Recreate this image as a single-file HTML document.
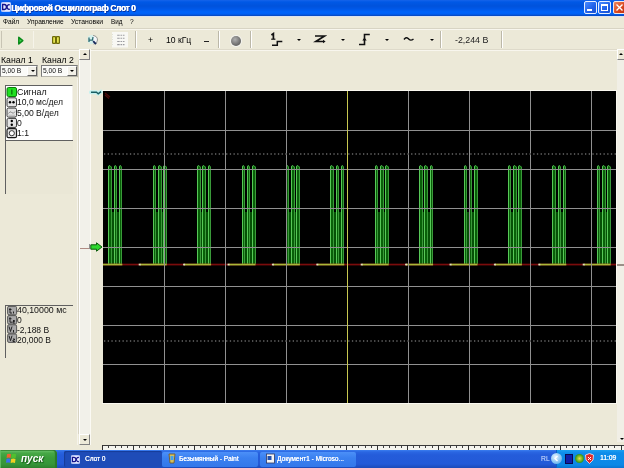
<!DOCTYPE html>
<html><head><meta charset="utf-8">
<style>
*{box-sizing:border-box}
html,body{margin:0;padding:0}
body{width:624px;height:468px;overflow:hidden;background:#ECE9D8;position:relative;font-family:"Liberation Sans",sans-serif;color:#000}
.a{position:absolute}
.t{position:absolute;white-space:pre;line-height:1;will-change:transform}
.sep{position:absolute;top:31px;width:2px;height:17px;border-left:1px solid #BCB8A8;border-right:1px solid #FFFFFF}
.dd{position:absolute;top:38.5px;width:0;height:0;border-left:2px solid transparent;border-right:2px solid transparent;border-top:2px solid #000}
.ic{position:absolute;width:9px;height:9px;background:#D6D3C8;border:1px solid #444}
</style></head><body>
<!-- ===== title bar ===== -->
<div class="a" style="left:0;top:0;width:624px;height:16px;background:linear-gradient(#1664EA 0px,#0058E6 2px,#0052DC 6px,#0058E8 9px,#0064FA 12px,#0060F4 14px,#0A46B8 16px)"></div>
<div class="a" style="left:0;top:16px;width:624px;height:1px;background:#DCE4F0"></div>
<svg class="a" style="left:1.3px;top:2.3px" width="10" height="10" viewBox="0 0 11 11">
<rect x="0.5" y="0.5" width="10" height="10" rx="1" fill="#E4E8FF" stroke="#C8D4FF" stroke-width="1"/>
<path d="M1.8 2.8 L3.8 2.8 Q6 3 6 5.5 Q6 8 3.8 8.2 L1.8 8.2 Z" fill="none" stroke="#14148C" stroke-width="1.5"/>
<path d="M9.6 3.2 Q7.2 2.2 6.6 5.5 Q7.2 8.8 9.6 7.8" fill="none" stroke="#14148C" stroke-width="1.5"/>
</svg>
<div class="t" style="left:11px;top:3.8px;font-size:8.4px;letter-spacing:-0.35px;font-weight:bold;color:#fff;text-shadow:0.45px 0 0 #fff,1px 1px 0 #0A2A90">Цифровой Осциллограф Слот 0</div>
<!-- min/max/close -->
<div class="a" style="left:584px;top:1px;width:13px;height:13px;border-radius:2px;border:1px solid #E6EEFF;background:linear-gradient(135deg,#4A8CFF,#2060E8 60%,#1850D0)"></div>
<div class="a" style="left:587px;top:9px;width:5px;height:2px;background:#fff"></div>
<div class="a" style="left:598px;top:1px;width:13px;height:13px;border-radius:2px;border:1px solid #E6EEFF;background:linear-gradient(135deg,#4A8CFF,#2060E8 60%,#1850D0)"></div>
<div class="a" style="left:601px;top:4px;width:7px;height:7px;border:1px solid #fff;border-top-width:2px"></div>
<div class="a" style="left:613px;top:1px;width:13px;height:13px;border-radius:2px;border:1px solid #F0E8E8;background:linear-gradient(135deg,#F08A60,#D8461E 60%,#C03010)"></div>
<svg class="a" style="left:615px;top:3px" width="9" height="9" viewBox="0 0 9 9"><path d="M1.5 1.5 L7.5 7.5 M7.5 1.5 L1.5 7.5" stroke="#fff" stroke-width="1.4"/></svg>

<!-- ===== menu ===== -->
<div class="t" style="left:3px;top:19.2px;font-size:6.6px">Файл</div>
<div class="t" style="left:26.5px;top:19.2px;font-size:6.6px">Управление</div>
<div class="t" style="left:70.5px;top:19.2px;font-size:6.8px">Установки</div>
<div class="t" style="left:111px;top:19.2px;font-size:6.3px">Вид</div>
<div class="t" style="left:130px;top:19.2px;font-size:6.6px">?</div>
<div class="a" style="left:0;top:28px;width:624px;height:1px;background:#D8D4C4"></div>
<div class="a" style="left:0;top:29px;width:624px;height:1px;background:#F8F6EE"></div>

<!-- ===== toolbar ===== -->
<div class="a" style="left:1px;top:31px;width:1px;height:17px;background:#C8C4B4"></div>
<div class="a" style="left:33px;top:31px;width:1px;height:17px;background:#F6F4EA"></div>
<!-- play -->
<svg class="a" style="left:17px;top:35.5px" width="8" height="10" viewBox="0 0 8 10"><path d="M1.8 1.3 L5.8 4.6 L1.8 7.9 Z" fill="#40D850" stroke="#0A8A1A" stroke-width="1.5" stroke-linejoin="round"/></svg>
<!-- pause -->
<svg class="a" style="left:52px;top:35.8px" width="8" height="8" viewBox="0 0 8 8"><rect x="0.6" y="0.6" width="3" height="6.8" rx="0.6" fill="#E6E650" stroke="#6E6A08" stroke-width="1.2"/><rect x="4.4" y="0.6" width="3" height="6.8" rx="0.6" fill="#E6E650" stroke="#6E6A08" stroke-width="1.2"/></svg>
<!-- magnifier -->
<svg class="a" style="left:84px;top:31px" width="18" height="17" viewBox="84 31 18 17"><ellipse cx="91.5" cy="39.5" rx="4" ry="4.6" fill="#D4F0EC"/><path d="M93 35.5 Q97.5 36 97.5 40 Q97.5 44 93.5 44" fill="#F4F6FA" stroke="#8A8C88" stroke-width="0.9"/><path d="M89 37.5 V42 M89 40.2 H92.5 L93 37" stroke="#2E6A70" stroke-width="1.3" fill="none"/><path d="M93.2 41.2 L96 44.2" stroke="#16285A" stroke-width="1.8"/></svg>
<!-- list -->
<svg class="a" style="left:112px;top:31px" width="17" height="17" viewBox="112 31 17 17"><rect x="112" y="32" width="16" height="15.5" fill="#F8F8F4"/><path d="M117.2 35.3h7.3M117.2 38.3h7.3M117.2 41.5h7.3M117.2 44.6h7.3" stroke="#9C9CA0" stroke-width="1.1" stroke-dasharray="2.5 0.8 1.5 0.8"/><path d="M112.5 34v12" stroke="#D8DCD0" stroke-width="0.8" stroke-dasharray="1 1.5"/></svg>
<div class="sep" style="left:135px"></div>
<div class="t" style="left:147.5px;top:36px;font-size:8.6px">+</div>
<div class="t" style="left:165.5px;top:36.2px;font-size:8.6px">10 кГц</div>
<div class="a" style="left:204px;top:40.5px;width:5px;height:1px;background:#222"></div>
<div class="sep" style="left:218px"></div>
<!-- ball -->
<div class="a" style="left:231px;top:35.5px;width:10px;height:10px;border-radius:50%;background:radial-gradient(circle at 40% 35%,#B0B0B0,#707070 60%,#505050);box-shadow:0 0 0 1px #F4F4F0"></div>
<div class="sep" style="left:250px"></div>
<!-- trigger mode icon 1_r -->
<svg class="a" style="left:268px;top:32px" width="16" height="15" viewBox="0 0 16 15">
<path d="M3.4 3 L5.4 1.6 L5.4 7" stroke="#111" stroke-width="1.7" fill="none"/><path d="M3.2 7.2 L7.4 7.2" stroke="#111" stroke-width="1.2"/>
<path d="M4 13.2 L9.3 13.2 L9.3 9.5 L14.3 9.5" stroke="#111" stroke-width="1.5" fill="none"/>
</svg>
<div class="dd" style="left:296.5px"></div>
<!-- Z icon -->
<svg class="a" style="left:313px;top:33px" width="14" height="12" viewBox="0 0 14 12">
<path d="M2 3 L11.5 3 L2.8 8.5 L10.5 8.5" stroke="#111" stroke-width="1.7" fill="none"/>
<path d="M10 6.8 L12.6 8.5 L10 10.2 Z" fill="#111"/>
</svg>
<div class="dd" style="left:340.5px"></div>
<!-- rising edge -->
<svg class="a" style="left:357px;top:32px" width="15" height="15" viewBox="0 0 15 15">
<path d="M2 12.5 L7.5 12.5 L7.5 2.5 L12.8 2.5" stroke="#111" stroke-width="1.6" fill="none"/>
<path d="M5.3 8.6 L7.5 5.5 L9.7 8.6 Z" fill="#111"/>
</svg>
<div class="dd" style="left:385px"></div>
<!-- tilde -->
<svg class="a" style="left:402px;top:35px" width="14" height="9" viewBox="0 0 14 9">
<path d="M2 4.5 Q4 1.5 6.2 3.5 Q8.5 6.5 11.5 4" stroke="#111" stroke-width="1.4" fill="none"/>
</svg>
<div class="dd" style="left:429.5px"></div>
<div class="sep" style="left:440px"></div>
<div class="t" style="left:454.5px;top:36.2px;font-size:8.8px;color:#222">-2,244 В</div>
<div class="sep" style="left:501px"></div>
<div class="a" style="left:0;top:49px;width:624px;height:1px;background:#DEDACA"></div>
<div class="a" style="left:0;top:50px;width:624px;height:1px;background:#F8F6EE"></div>

<!-- ===== left panel ===== -->
<div class="t" style="left:1.3px;top:55.8px;font-size:8.7px">Канал 1</div>
<div class="t" style="left:42.3px;top:55.8px;font-size:8.7px">Канал 2</div>
<!-- combos -->
<div class="a" style="left:0px;top:65px;width:38px;height:12px;background:#FBFBF8;border-top:1px solid #7A7A7A;border-left:1px solid #7A7A7A;border-bottom:1px solid #B8B6AC;border-right:1px solid #B8B6AC"></div>
<div class="a" style="left:27px;top:66px;width:10px;height:10px;background:#F2F0E8;border-right:1px solid #606060;border-bottom:1px solid #606060;border-left:1px solid #FFF;border-top:1px solid #FFF"></div>
<div class="dd" style="left:30.5px;top:70px;border-left-width:2px;border-right-width:2px;border-top-width:2.5px"></div>
<div class="t" style="left:1.8px;top:68.4px;font-size:6.7px;color:#111">5,00 В</div>
<div class="a" style="left:40.5px;top:65px;width:37px;height:12px;background:#FBFBF8;border-top:1px solid #7A7A7A;border-left:1px solid #7A7A7A;border-bottom:1px solid #B8B6AC;border-right:1px solid #B8B6AC"></div>
<div class="a" style="left:66.5px;top:66px;width:10px;height:10px;background:#F2F0E8;border-right:1px solid #606060;border-bottom:1px solid #606060;border-left:1px solid #FFF;border-top:1px solid #FFF"></div>
<div class="dd" style="left:70px;top:70px;border-left-width:2px;border-right-width:2px;border-top-width:2.5px"></div>
<div class="t" style="left:42.5px;top:68.4px;font-size:6.7px;color:#111">5,00 В</div>
<!-- panel edge -->
<div class="a" style="left:77px;top:78px;width:1px;height:367px;background:#F6F4EC"></div><div class="a" style="left:78px;top:60px;width:1px;height:374px;background:#D8D4C4"></div>
<!-- info box -->
<div class="a" style="left:5px;top:85px;width:67.5px;height:55px;background:#FFFFFF;border-top:1px solid #606060;border-left:1px solid #606060;border-right:1px solid #F4F2EA"></div>
<svg class="a" style="left:6px;top:87px" width="12" height="52" viewBox="0 0 12 52">
<rect x="1" y="0.5" width="9.5" height="9" rx="1.5" fill="#20E020" stroke="#0A7A0A" stroke-width="1"/>
<rect x="5" y="2.5" width="1.6" height="5" fill="#0C8A0C"/>
<rect x="1" y="10.8" width="9.5" height="9" rx="1.5" fill="#E4E4E4" stroke="#3A3A3A" stroke-width="1"/>
<circle cx="4" cy="15.3" r="1.2" fill="#000"/><circle cx="7.5" cy="15.3" r="1.2" fill="#000"/>
<rect x="1" y="21.1" width="9.5" height="9" rx="1.5" fill="#E4E4E4" stroke="#3A3A3A" stroke-width="1"/>
<path d="M2.5 26.5 Q4 23.5 5.7 25.5 T9 24.5" stroke="#808080" stroke-width="0.9" fill="none"/>
<path d="M2.5 28.2 H9" stroke="#A0A0A0" stroke-width="0.7"/>
<rect x="1" y="31.4" width="9.5" height="9" rx="1.5" fill="#E4E4E4" stroke="#3A3A3A" stroke-width="1"/>
<circle cx="5.8" cy="34" r="1.2" fill="#000"/><circle cx="5.8" cy="37.8" r="1.2" fill="#000"/>
<rect x="1" y="41.7" width="9.5" height="9" rx="1.5" fill="#E4E4E4" stroke="#1A1A1A" stroke-width="1.2"/>
<circle cx="5.8" cy="46.2" r="2.6" fill="#FFF" stroke="#222" stroke-width="0.9"/>
</svg>
<div class="t" style="left:17.2px;top:87.6px;font-size:8.9px;color:#111">Сигнал</div>
<div class="t" style="left:17.2px;top:98.3px;font-size:8.55px;color:#111">10,0 мс/дел</div>
<div class="t" style="left:17.2px;top:108.5px;font-size:8.6px;color:#111">5,00 В/дел</div>
<div class="t" style="left:17.2px;top:118.7px;font-size:8.6px;color:#111">0</div>
<div class="t" style="left:17.2px;top:128.9px;font-size:8.6px;color:#111">1:1</div>
<!-- second frame -->
<div class="a" style="left:5px;top:140px;width:67.5px;height:54px;border-top:1px solid #606060;border-left:1px solid #606060;background:#EAE7D6"></div>
<!-- bottom box -->
<div class="a" style="left:5px;top:304.5px;width:68px;height:53px;border-top:1px solid #606060;border-left:1px solid #606060"></div>
<svg class="a" style="left:7px;top:306px" width="11" height="38" viewBox="0 0 11 38">
<g fill="#A8A8A8" stroke="#4A4A4A" stroke-width="0.9">
<rect x="0.6" y="0.4" width="9" height="8.4" rx="1.3"/>
<rect x="0.6" y="9.6" width="9" height="8.4" rx="1.3"/>
<rect x="0.6" y="18.8" width="9" height="8.4" rx="1.3"/>
<rect x="0.6" y="28" width="9" height="8.4" rx="1.3"/>
</g>
<g stroke="#222" stroke-width="1" fill="none">
<path d="M3 2 V7 H5 M2 3.5 H4.5"/><path d="M6.5 5.5 V7.5"/>
<path d="M3 11.2 V16.2 H5 M2 12.7 H4.5"/><path d="M6 14.5 H7.5 V15.5 H6 V17 H7.8"/>
<path d="M2 20.5 L3.5 25.5 L5 20.5"/><path d="M6.5 24 V26.5"/>
<path d="M2 29.7 L3.5 34.7 L5 29.7"/><path d="M6 33 H7.5 V34 H6 V35.5 H7.8"/>
</g>
</svg>
<div class="t" style="left:16.7px;top:306.3px;font-size:8.8px;color:#111">40,10000 мс</div>
<div class="t" style="left:16.7px;top:316.3px;font-size:8.5px;color:#111">0</div>
<div class="t" style="left:16.7px;top:326.3px;font-size:8.5px;color:#111">-2,188 В</div>
<div class="t" style="left:16.7px;top:336.2px;font-size:8.5px;color:#111">20,000 В</div>

<!-- ===== left scrollbar ===== -->
<div class="a" style="left:79px;top:49px;width:12px;height:396px;background:#F2F1EA;border-left:1px solid #FFFFFF;border-right:1px solid #FBFAF4"></div>
<div class="a" style="left:79px;top:49px;width:11px;height:11px;background:#ECE9D8;border-right:1px solid #808080;border-bottom:1px solid #808080;border-left:1px solid #fff;border-top:1px solid #fff"></div>
<div class="dd" style="left:82.5px;top:53px;border-top:0;border-bottom:2.5px solid #000;border-left-width:2px;border-right-width:2px"></div>
<div class="a" style="left:79px;top:434px;width:11px;height:11px;background:#ECE9D8;border-right:1px solid #808080;border-bottom:1px solid #808080;border-left:1px solid #fff;border-top:1px solid #fff"></div>
<div class="dd" style="left:82.5px;top:438.5px;border-left-width:2px;border-right-width:2px;border-top-width:2.5px"></div>
<div class="a" style="left:80px;top:247.5px;width:9px;height:1px;background:#B08C84"></div>
<div class="a" style="left:89px;top:244px;width:1px;height:5px;background:#909090"></div>

<!-- markers -->
<svg class="a" style="left:88px;top:86px" width="15" height="12" viewBox="88 86 15 12">
<path d="M91 92.3 L96.5 92.3 L98.2 93.8 L101 91.6" stroke="#C4F2F0" stroke-width="4" fill="none" stroke-linejoin="round" stroke-linecap="round"/>
<path d="M91 92.3 L96.5 92.3 L98.2 93.8 L101 91.6" stroke="#1A5E62" stroke-width="1.4" fill="none"/>
</svg>
<svg class="a" style="left:90px;top:242px" width="13" height="10" viewBox="0 0 13 10">
<path d="M0.8 2.8 L6.5 2.8 L6.5 0.8 L12 5 L6.5 9.2 L6.5 7.2 L0.8 7.2 Z" fill="#2ED82E" stroke="#0A5A0A" stroke-width="1"/>
</svg>

<svg class="a" style="left:103px;top:91px" width="513" height="312" viewBox="103 91 513 312">
<rect x="103" y="91" width="513" height="312" fill="#000"/>
<rect x="108" y="212" width="14" height="52" fill="#065006"/>
<rect x="108.5" y="166" width="3.0" height="98.5" fill="#086008"/>
<polyline points="108.5,167 109.3,165.5 111.5,167 111.5,264.5" fill="none" stroke="#3A9A3A" stroke-width="1"/>
<polyline points="108.5,264.5 108.5,166.5 109.3,165.5" fill="none" stroke="#58C858" stroke-width="1"/>
<rect x="114.5" y="166" width="2.0" height="98.5" fill="#086008"/>
<polyline points="114.5,167 115.3,165.5 116.5,167 116.5,264.5" fill="none" stroke="#3A9A3A" stroke-width="1"/>
<polyline points="114.5,264.5 114.5,166.5 115.3,165.5" fill="none" stroke="#58C858" stroke-width="1"/>
<rect x="119.5" y="166" width="2.0" height="98.5" fill="#086008"/>
<polyline points="119.5,167 120.3,165.5 121.5,167 121.5,264.5" fill="none" stroke="#3A9A3A" stroke-width="1"/>
<polyline points="119.5,264.5 119.5,166.5 120.3,165.5" fill="none" stroke="#58C858" stroke-width="1"/>
<rect x="153" y="212" width="14" height="52" fill="#065006"/>
<rect x="153.5" y="166" width="2.0" height="98.5" fill="#086008"/>
<polyline points="153.5,167 154.3,165.5 155.5,167 155.5,264.5" fill="none" stroke="#3A9A3A" stroke-width="1"/>
<polyline points="153.5,264.5 153.5,166.5 154.3,165.5" fill="none" stroke="#58C858" stroke-width="1"/>
<rect x="158.5" y="166" width="3.0" height="98.5" fill="#086008"/>
<polyline points="158.5,167 159.3,165.5 161.5,167 161.5,264.5" fill="none" stroke="#3A9A3A" stroke-width="1"/>
<polyline points="158.5,264.5 158.5,166.5 159.3,165.5" fill="none" stroke="#58C858" stroke-width="1"/>
<rect x="163.5" y="166" width="3.0" height="98.5" fill="#086008"/>
<polyline points="163.5,167 164.3,165.5 166.5,167 166.5,264.5" fill="none" stroke="#3A9A3A" stroke-width="1"/>
<polyline points="163.5,264.5 163.5,166.5 164.3,165.5" fill="none" stroke="#58C858" stroke-width="1"/>
<rect x="197" y="212" width="14" height="52" fill="#065006"/>
<rect x="197.5" y="166" width="3.0" height="98.5" fill="#086008"/>
<polyline points="197.5,167 198.3,165.5 200.5,167 200.5,264.5" fill="none" stroke="#3A9A3A" stroke-width="1"/>
<polyline points="197.5,264.5 197.5,166.5 198.3,165.5" fill="none" stroke="#58C858" stroke-width="1"/>
<rect x="202.5" y="166" width="3.0" height="98.5" fill="#086008"/>
<polyline points="202.5,167 203.3,165.5 205.5,167 205.5,264.5" fill="none" stroke="#3A9A3A" stroke-width="1"/>
<polyline points="202.5,264.5 202.5,166.5 203.3,165.5" fill="none" stroke="#58C858" stroke-width="1"/>
<rect x="208.5" y="166" width="2.0" height="98.5" fill="#086008"/>
<polyline points="208.5,167 209.3,165.5 210.5,167 210.5,264.5" fill="none" stroke="#3A9A3A" stroke-width="1"/>
<polyline points="208.5,264.5 208.5,166.5 209.3,165.5" fill="none" stroke="#58C858" stroke-width="1"/>
<rect x="242" y="212" width="14" height="52" fill="#065006"/>
<rect x="242.5" y="166" width="2.0" height="98.5" fill="#086008"/>
<polyline points="242.5,167 243.3,165.5 244.5,167 244.5,264.5" fill="none" stroke="#3A9A3A" stroke-width="1"/>
<polyline points="242.5,264.5 242.5,166.5 243.3,165.5" fill="none" stroke="#58C858" stroke-width="1"/>
<rect x="247.5" y="166" width="2.0" height="98.5" fill="#086008"/>
<polyline points="247.5,167 248.3,165.5 249.5,167 249.5,264.5" fill="none" stroke="#3A9A3A" stroke-width="1"/>
<polyline points="247.5,264.5 247.5,166.5 248.3,165.5" fill="none" stroke="#58C858" stroke-width="1"/>
<rect x="252.5" y="166" width="3.0" height="98.5" fill="#086008"/>
<polyline points="252.5,167 253.3,165.5 255.5,167 255.5,264.5" fill="none" stroke="#3A9A3A" stroke-width="1"/>
<polyline points="252.5,264.5 252.5,166.5 253.3,165.5" fill="none" stroke="#58C858" stroke-width="1"/>
<rect x="286" y="212" width="14" height="52" fill="#065006"/>
<rect x="286.5" y="166" width="2.0" height="98.5" fill="#086008"/>
<polyline points="286.5,167 287.3,165.5 288.5,167 288.5,264.5" fill="none" stroke="#3A9A3A" stroke-width="1"/>
<polyline points="286.5,264.5 286.5,166.5 287.3,165.5" fill="none" stroke="#58C858" stroke-width="1"/>
<rect x="291.5" y="166" width="3.0" height="98.5" fill="#086008"/>
<polyline points="291.5,167 292.3,165.5 294.5,167 294.5,264.5" fill="none" stroke="#3A9A3A" stroke-width="1"/>
<polyline points="291.5,264.5 291.5,166.5 292.3,165.5" fill="none" stroke="#58C858" stroke-width="1"/>
<rect x="296.5" y="166" width="3.0" height="98.5" fill="#086008"/>
<polyline points="296.5,167 297.3,165.5 299.5,167 299.5,264.5" fill="none" stroke="#3A9A3A" stroke-width="1"/>
<polyline points="296.5,264.5 296.5,166.5 297.3,165.5" fill="none" stroke="#58C858" stroke-width="1"/>
<rect x="330" y="212" width="14" height="52" fill="#065006"/>
<rect x="330.5" y="166" width="3.0" height="98.5" fill="#086008"/>
<polyline points="330.5,167 331.3,165.5 333.5,167 333.5,264.5" fill="none" stroke="#3A9A3A" stroke-width="1"/>
<polyline points="330.5,264.5 330.5,166.5 331.3,165.5" fill="none" stroke="#58C858" stroke-width="1"/>
<rect x="336.5" y="166" width="2.0" height="98.5" fill="#086008"/>
<polyline points="336.5,167 337.3,165.5 338.5,167 338.5,264.5" fill="none" stroke="#3A9A3A" stroke-width="1"/>
<polyline points="336.5,264.5 336.5,166.5 337.3,165.5" fill="none" stroke="#58C858" stroke-width="1"/>
<rect x="341.5" y="166" width="2.0" height="98.5" fill="#086008"/>
<polyline points="341.5,167 342.3,165.5 343.5,167 343.5,264.5" fill="none" stroke="#3A9A3A" stroke-width="1"/>
<polyline points="341.5,264.5 341.5,166.5 342.3,165.5" fill="none" stroke="#58C858" stroke-width="1"/>
<rect x="375" y="212" width="14" height="52" fill="#065006"/>
<rect x="375.5" y="166" width="2.0" height="98.5" fill="#086008"/>
<polyline points="375.5,167 376.3,165.5 377.5,167 377.5,264.5" fill="none" stroke="#3A9A3A" stroke-width="1"/>
<polyline points="375.5,264.5 375.5,166.5 376.3,165.5" fill="none" stroke="#58C858" stroke-width="1"/>
<rect x="380.5" y="166" width="3.0" height="98.5" fill="#086008"/>
<polyline points="380.5,167 381.3,165.5 383.5,167 383.5,264.5" fill="none" stroke="#3A9A3A" stroke-width="1"/>
<polyline points="380.5,264.5 380.5,166.5 381.3,165.5" fill="none" stroke="#58C858" stroke-width="1"/>
<rect x="385.5" y="166" width="3.0" height="98.5" fill="#086008"/>
<polyline points="385.5,167 386.3,165.5 388.5,167 388.5,264.5" fill="none" stroke="#3A9A3A" stroke-width="1"/>
<polyline points="385.5,264.5 385.5,166.5 386.3,165.5" fill="none" stroke="#58C858" stroke-width="1"/>
<rect x="419" y="212" width="14" height="52" fill="#065006"/>
<rect x="419.5" y="166" width="3.0" height="98.5" fill="#086008"/>
<polyline points="419.5,167 420.3,165.5 422.5,167 422.5,264.5" fill="none" stroke="#3A9A3A" stroke-width="1"/>
<polyline points="419.5,264.5 419.5,166.5 420.3,165.5" fill="none" stroke="#58C858" stroke-width="1"/>
<rect x="424.5" y="166" width="3.0" height="98.5" fill="#086008"/>
<polyline points="424.5,167 425.3,165.5 427.5,167 427.5,264.5" fill="none" stroke="#3A9A3A" stroke-width="1"/>
<polyline points="424.5,264.5 424.5,166.5 425.3,165.5" fill="none" stroke="#58C858" stroke-width="1"/>
<rect x="430.5" y="166" width="2.0" height="98.5" fill="#086008"/>
<polyline points="430.5,167 431.3,165.5 432.5,167 432.5,264.5" fill="none" stroke="#3A9A3A" stroke-width="1"/>
<polyline points="430.5,264.5 430.5,166.5 431.3,165.5" fill="none" stroke="#58C858" stroke-width="1"/>
<rect x="464" y="212" width="14" height="52" fill="#065006"/>
<rect x="464.5" y="166" width="2.0" height="98.5" fill="#086008"/>
<polyline points="464.5,167 465.3,165.5 466.5,167 466.5,264.5" fill="none" stroke="#3A9A3A" stroke-width="1"/>
<polyline points="464.5,264.5 464.5,166.5 465.3,165.5" fill="none" stroke="#58C858" stroke-width="1"/>
<rect x="469.5" y="166" width="2.0" height="98.5" fill="#086008"/>
<polyline points="469.5,167 470.3,165.5 471.5,167 471.5,264.5" fill="none" stroke="#3A9A3A" stroke-width="1"/>
<polyline points="469.5,264.5 469.5,166.5 470.3,165.5" fill="none" stroke="#58C858" stroke-width="1"/>
<rect x="474.5" y="166" width="3.0" height="98.5" fill="#086008"/>
<polyline points="474.5,167 475.3,165.5 477.5,167 477.5,264.5" fill="none" stroke="#3A9A3A" stroke-width="1"/>
<polyline points="474.5,264.5 474.5,166.5 475.3,165.5" fill="none" stroke="#58C858" stroke-width="1"/>
<rect x="508" y="212" width="14" height="52" fill="#065006"/>
<rect x="508.5" y="166" width="2.0" height="98.5" fill="#086008"/>
<polyline points="508.5,167 509.3,165.5 510.5,167 510.5,264.5" fill="none" stroke="#3A9A3A" stroke-width="1"/>
<polyline points="508.5,264.5 508.5,166.5 509.3,165.5" fill="none" stroke="#58C858" stroke-width="1"/>
<rect x="513.5" y="166" width="3.0" height="98.5" fill="#086008"/>
<polyline points="513.5,167 514.3,165.5 516.5,167 516.5,264.5" fill="none" stroke="#3A9A3A" stroke-width="1"/>
<polyline points="513.5,264.5 513.5,166.5 514.3,165.5" fill="none" stroke="#58C858" stroke-width="1"/>
<rect x="518.5" y="166" width="3.0" height="98.5" fill="#086008"/>
<polyline points="518.5,167 519.3,165.5 521.5,167 521.5,264.5" fill="none" stroke="#3A9A3A" stroke-width="1"/>
<polyline points="518.5,264.5 518.5,166.5 519.3,165.5" fill="none" stroke="#58C858" stroke-width="1"/>
<rect x="552" y="212" width="14" height="52" fill="#065006"/>
<rect x="552.5" y="166" width="3.0" height="98.5" fill="#086008"/>
<polyline points="552.5,167 553.3,165.5 555.5,167 555.5,264.5" fill="none" stroke="#3A9A3A" stroke-width="1"/>
<polyline points="552.5,264.5 552.5,166.5 553.3,165.5" fill="none" stroke="#58C858" stroke-width="1"/>
<rect x="558.5" y="166" width="2.0" height="98.5" fill="#086008"/>
<polyline points="558.5,167 559.3,165.5 560.5,167 560.5,264.5" fill="none" stroke="#3A9A3A" stroke-width="1"/>
<polyline points="558.5,264.5 558.5,166.5 559.3,165.5" fill="none" stroke="#58C858" stroke-width="1"/>
<rect x="563.5" y="166" width="2.0" height="98.5" fill="#086008"/>
<polyline points="563.5,167 564.3,165.5 565.5,167 565.5,264.5" fill="none" stroke="#3A9A3A" stroke-width="1"/>
<polyline points="563.5,264.5 563.5,166.5 564.3,165.5" fill="none" stroke="#58C858" stroke-width="1"/>
<rect x="597" y="212" width="14" height="52" fill="#065006"/>
<rect x="597.5" y="166" width="2.0" height="98.5" fill="#086008"/>
<polyline points="597.5,167 598.3,165.5 599.5,167 599.5,264.5" fill="none" stroke="#3A9A3A" stroke-width="1"/>
<polyline points="597.5,264.5 597.5,166.5 598.3,165.5" fill="none" stroke="#58C858" stroke-width="1"/>
<rect x="602.5" y="166" width="3.0" height="98.5" fill="#086008"/>
<polyline points="602.5,167 603.3,165.5 605.5,167 605.5,264.5" fill="none" stroke="#3A9A3A" stroke-width="1"/>
<polyline points="602.5,264.5 602.5,166.5 603.3,165.5" fill="none" stroke="#58C858" stroke-width="1"/>
<rect x="607.5" y="166" width="3.0" height="98.5" fill="#086008"/>
<polyline points="607.5,167 608.3,165.5 610.5,167 610.5,264.5" fill="none" stroke="#3A9A3A" stroke-width="1"/>
<polyline points="607.5,264.5 607.5,166.5 608.3,165.5" fill="none" stroke="#58C858" stroke-width="1"/>
<rect x="103" y="263.7" width="513" height="1.7" fill="#7A0C0C"/>
<rect x="103.0" y="263.7" width="19.3" height="1.7" fill="#A8B838"/>
<rect x="139.7" y="263.7" width="27.0" height="1.7" fill="#A8B838"/>
<rect x="138.7" y="263.7" width="2" height="1.7" fill="#E0E0C0"/>
<rect x="184.1" y="263.7" width="27.0" height="1.7" fill="#A8B838"/>
<rect x="183.1" y="263.7" width="2" height="1.7" fill="#E0E0C0"/>
<rect x="228.5" y="263.7" width="27.0" height="1.7" fill="#A8B838"/>
<rect x="227.5" y="263.7" width="2" height="1.7" fill="#E0E0C0"/>
<rect x="272.9" y="263.7" width="27.0" height="1.7" fill="#A8B838"/>
<rect x="271.9" y="263.7" width="2" height="1.7" fill="#E0E0C0"/>
<rect x="317.3" y="263.7" width="27.0" height="1.7" fill="#A8B838"/>
<rect x="316.3" y="263.7" width="2" height="1.7" fill="#E0E0C0"/>
<rect x="361.7" y="263.7" width="27.0" height="1.7" fill="#A8B838"/>
<rect x="360.7" y="263.7" width="2" height="1.7" fill="#E0E0C0"/>
<rect x="406.1" y="263.7" width="27.0" height="1.7" fill="#A8B838"/>
<rect x="405.1" y="263.7" width="2" height="1.7" fill="#E0E0C0"/>
<rect x="450.5" y="263.7" width="27.0" height="1.7" fill="#A8B838"/>
<rect x="449.5" y="263.7" width="2" height="1.7" fill="#E0E0C0"/>
<rect x="494.9" y="263.7" width="27.0" height="1.7" fill="#A8B838"/>
<rect x="493.9" y="263.7" width="2" height="1.7" fill="#E0E0C0"/>
<rect x="539.3" y="263.7" width="27.0" height="1.7" fill="#A8B838"/>
<rect x="538.3" y="263.7" width="2" height="1.7" fill="#E0E0C0"/>
<rect x="583.7" y="263.7" width="27.0" height="1.7" fill="#A8B838"/>
<rect x="582.7" y="263.7" width="2" height="1.7" fill="#E0E0C0"/>
<g shape-rendering="crispEdges">
<rect x="164" y="91" width="1" height="312" fill="#909090"/>
<rect x="225" y="91" width="1" height="312" fill="#909090"/>
<rect x="286" y="91" width="1" height="312" fill="#909090"/>
<rect x="408" y="91" width="1" height="312" fill="#909090"/>
<rect x="469" y="91" width="1" height="312" fill="#909090"/>
<rect x="530" y="91" width="1" height="312" fill="#909090"/>
<rect x="591" y="91" width="1" height="312" fill="#909090"/>
<rect x="103" y="130" width="513" height="1" fill="#909090"/>
<rect x="103" y="169" width="513" height="1" fill="#909090"/>
<rect x="103" y="208" width="513" height="1" fill="#909090"/>
<rect x="103" y="247" width="513" height="1" fill="#909090"/>
<rect x="103" y="286" width="513" height="1" fill="#909090"/>
<rect x="103" y="325" width="513" height="1" fill="#909090"/>
<rect x="103" y="364" width="513" height="1" fill="#909090"/>
</g>
<line x1="104" y1="154" x2="616" y2="154" stroke="#4E4E4E" stroke-width="2" stroke-dasharray="1.3 2.4"/>
<line x1="104" y1="341" x2="616" y2="341" stroke="#4E4E4E" stroke-width="2" stroke-dasharray="1.3 2.4"/>
<rect x="347" y="91" width="1" height="312" fill="#C8C850"/>
</svg>

<!-- scope light border -->
<div class="a" style="left:102px;top:90px;width:515px;height:1px;background:#FAF8F0"></div>
<div class="a" style="left:616px;top:90px;width:1px;height:314px;background:#FAF8F0"></div>
<div class="a" style="left:102px;top:403px;width:515px;height:1px;background:#FAF8F0"></div>
<svg class="a" style="left:104px;top:92px" width="8" height="8" viewBox="0 0 8 8"><path d="M1 1 L6 5 M1 3 L5 6.5" stroke="#4A0C0C" stroke-width="1.4"/></svg>

<!-- ===== right scrollbar ===== -->
<div class="a" style="left:617px;top:49px;width:7px;height:393px;background:#F1EFE6"></div>
<div class="a" style="left:617px;top:49px;width:7px;height:11px;background:#ECE9D8;border-bottom:1px solid #808080;border-left:1px solid #fff;border-top:1px solid #fff"></div>
<div class="dd" style="left:619px;top:53px;border-top:0;border-bottom:2.5px solid #000;border-left-width:2px;border-right-width:2px"></div>

<div class="dd" style="left:619.5px;top:438px;border-left-width:2px;border-right-width:2px;border-top-width:2.5px"></div>

<div class="a" style="left:617px;top:264px;width:7px;height:2px;background:#9A9088"></div>
<svg class="a" style="left:0;top:440px" width="624" height="10" viewBox="0 440 624 10" shape-rendering="crispEdges">
<rect x="102" y="446" width="522" height="4" fill="#F4F4EE"/>
<rect x="102" y="445" width="522" height="1" fill="#3A3A3A"/>
<rect x="102" y="445" width="1" height="5" fill="#303030"/>
<rect x="108" y="446" width="1" height="2" fill="#404040"/>
<rect x="115" y="446" width="1" height="2" fill="#404040"/>
<rect x="121" y="446" width="1" height="2" fill="#404040"/>
<rect x="127" y="446" width="1" height="2" fill="#404040"/>
<rect x="133" y="445" width="1" height="5" fill="#303030"/>
<rect x="139" y="446" width="1" height="2" fill="#404040"/>
<rect x="145" y="446" width="1" height="2" fill="#404040"/>
<rect x="151" y="446" width="1" height="2" fill="#404040"/>
<rect x="157" y="446" width="1" height="2" fill="#404040"/>
<rect x="163" y="445" width="1" height="5" fill="#303030"/>
<rect x="169" y="446" width="1" height="2" fill="#404040"/>
<rect x="176" y="446" width="1" height="2" fill="#404040"/>
<rect x="182" y="446" width="1" height="2" fill="#404040"/>
<rect x="188" y="446" width="1" height="2" fill="#404040"/>
<rect x="194" y="445" width="1" height="5" fill="#303030"/>
<rect x="200" y="446" width="1" height="2" fill="#404040"/>
<rect x="206" y="446" width="1" height="2" fill="#404040"/>
<rect x="212" y="446" width="1" height="2" fill="#404040"/>
<rect x="218" y="446" width="1" height="2" fill="#404040"/>
<rect x="224" y="445" width="1" height="5" fill="#303030"/>
<rect x="230" y="446" width="1" height="2" fill="#404040"/>
<rect x="237" y="446" width="1" height="2" fill="#404040"/>
<rect x="243" y="446" width="1" height="2" fill="#404040"/>
<rect x="249" y="446" width="1" height="2" fill="#404040"/>
<rect x="255" y="445" width="1" height="5" fill="#303030"/>
<rect x="261" y="446" width="1" height="2" fill="#404040"/>
<rect x="267" y="446" width="1" height="2" fill="#404040"/>
<rect x="273" y="446" width="1" height="2" fill="#404040"/>
<rect x="279" y="446" width="1" height="2" fill="#404040"/>
<rect x="285" y="445" width="1" height="5" fill="#303030"/>
<rect x="291" y="446" width="1" height="2" fill="#404040"/>
<rect x="297" y="446" width="1" height="2" fill="#404040"/>
<rect x="304" y="446" width="1" height="2" fill="#404040"/>
<rect x="310" y="446" width="1" height="2" fill="#404040"/>
<rect x="316" y="445" width="1" height="5" fill="#303030"/>
<rect x="322" y="446" width="1" height="2" fill="#404040"/>
<rect x="328" y="446" width="1" height="2" fill="#404040"/>
<rect x="334" y="446" width="1" height="2" fill="#404040"/>
<rect x="340" y="446" width="1" height="2" fill="#404040"/>
<rect x="346" y="445" width="1" height="5" fill="#303030"/>
<rect x="352" y="446" width="1" height="2" fill="#404040"/>
<rect x="358" y="446" width="1" height="2" fill="#404040"/>
<rect x="365" y="446" width="1" height="2" fill="#404040"/>
<rect x="371" y="446" width="1" height="2" fill="#404040"/>
<rect x="377" y="445" width="1" height="5" fill="#303030"/>
<rect x="383" y="446" width="1" height="2" fill="#404040"/>
<rect x="389" y="446" width="1" height="2" fill="#404040"/>
<rect x="395" y="446" width="1" height="2" fill="#404040"/>
<rect x="401" y="446" width="1" height="2" fill="#404040"/>
<rect x="407" y="445" width="1" height="5" fill="#303030"/>
<rect x="413" y="446" width="1" height="2" fill="#404040"/>
<rect x="419" y="446" width="1" height="2" fill="#404040"/>
<rect x="425" y="446" width="1" height="2" fill="#404040"/>
<rect x="432" y="446" width="1" height="2" fill="#404040"/>
<rect x="438" y="445" width="1" height="5" fill="#303030"/>
<rect x="444" y="446" width="1" height="2" fill="#404040"/>
<rect x="450" y="446" width="1" height="2" fill="#404040"/>
<rect x="456" y="446" width="1" height="2" fill="#404040"/>
<rect x="462" y="446" width="1" height="2" fill="#404040"/>
<rect x="468" y="445" width="1" height="5" fill="#303030"/>
<rect x="474" y="446" width="1" height="2" fill="#404040"/>
<rect x="480" y="446" width="1" height="2" fill="#404040"/>
<rect x="486" y="446" width="1" height="2" fill="#404040"/>
<rect x="493" y="446" width="1" height="2" fill="#404040"/>
<rect x="499" y="445" width="1" height="5" fill="#303030"/>
<rect x="505" y="446" width="1" height="2" fill="#404040"/>
<rect x="511" y="446" width="1" height="2" fill="#404040"/>
<rect x="517" y="446" width="1" height="2" fill="#404040"/>
<rect x="523" y="446" width="1" height="2" fill="#404040"/>
<rect x="529" y="445" width="1" height="5" fill="#303030"/>
<rect x="535" y="446" width="1" height="2" fill="#404040"/>
<rect x="541" y="446" width="1" height="2" fill="#404040"/>
<rect x="547" y="446" width="1" height="2" fill="#404040"/>
<rect x="554" y="446" width="1" height="2" fill="#404040"/>
<rect x="560" y="445" width="1" height="5" fill="#303030"/>
<rect x="566" y="446" width="1" height="2" fill="#404040"/>
<rect x="572" y="446" width="1" height="2" fill="#404040"/>
<rect x="578" y="446" width="1" height="2" fill="#404040"/>
<rect x="584" y="446" width="1" height="2" fill="#404040"/>
<rect x="590" y="445" width="1" height="5" fill="#303030"/>
<rect x="596" y="446" width="1" height="2" fill="#404040"/>
<rect x="602" y="446" width="1" height="2" fill="#404040"/>
<rect x="608" y="446" width="1" height="2" fill="#404040"/>
<rect x="614" y="446" width="1" height="2" fill="#404040"/>
<rect x="621" y="445" width="1" height="5" fill="#303030"/>
</svg>

<!-- ===== taskbar ===== -->
<div class="a" style="left:0;top:450px;width:624px;height:18px;background:linear-gradient(#3A7EF0 0px,#2A66E2 2px,#245CDA 5px,#235AD8 14px,#1C4AB8 18px)"></div>
<!-- start -->
<div class="a" style="left:0;top:450px;width:57px;height:18px;border-radius:0 4px 0 0;background:linear-gradient(#2E7A2E 0px,#5CB85C 1.5px,#46A846 3px,#3A9C3A 8px,#36963A 14px,#2E842E 18px);box-shadow:inset -2px 0 1px #2A7A2A, inset 1px 0 0 #60B860"></div>
<svg class="a" style="left:6px;top:453px" width="11" height="11" viewBox="0 0 11 11">
<path d="M1 1.2 Q3 0.3 5 1.2 L4.6 5 Q2.6 4.2 0.6 5 Z" fill="#F06030"/>
<path d="M5.6 1.2 Q7.8 0.3 10.2 1.2 L9.6 5.2 Q7.4 4.4 5.2 5.2 Z" fill="#50C030"/>
<path d="M0.5 5.8 Q2.6 5 4.5 5.8 L4.1 9.8 Q2 9 0 9.8 Z" fill="#3A70F0"/>
<path d="M5.1 5.9 Q7.3 5 9.5 5.9 L9 10 Q6.8 9.2 4.6 10 Z" fill="#F0D020"/>
</svg>
<div class="t" style="left:20.5px;top:453.5px;font-size:10px;font-weight:bold;font-style:italic;color:#fff;text-shadow:1px 1px 1px #1A5A1A">пуск</div>
<!-- task buttons -->
<div class="a" style="left:64px;top:451px;width:98px;height:16px;border-radius:2px;background:#1E4CB8;box-shadow:inset 1px 1px 1px #163C98"></div>
<svg class="a" style="left:70.8px;top:455px" width="9" height="9" viewBox="0 0 11 11">
<rect x="0.5" y="0.5" width="10" height="10" rx="1" fill="#E4E8FF" stroke="#C8D4FF" stroke-width="1"/>
<path d="M1.8 2.8 L3.8 2.8 Q6 3 6 5.5 Q6 8 3.8 8.2 L1.8 8.2 Z" fill="none" stroke="#14148C" stroke-width="1.5"/>
<path d="M9.6 3.2 Q7.2 2.2 6.6 5.5 Q7.2 8.8 9.6 7.8" fill="none" stroke="#14148C" stroke-width="1.5"/>
</svg>
<div class="t" style="left:84.6px;top:455.5px;font-size:6.45px;color:#fff;text-shadow:0.3px 0 0 #fff">Слот 0</div>
<div class="a" style="left:161.5px;top:451.5px;width:96px;height:15px;border-radius:2px;background:linear-gradient(#4C90F8,#3A80F0 40%,#3478EA)"></div>
<svg class="a" style="left:167px;top:453px" width="10" height="11" viewBox="0 0 10 11"><path d="M2 1 L8 1 L7 10 L3 10 Z" fill="#D0C060" stroke="#705020" stroke-width="0.8"/><rect x="3.5" y="3" width="3" height="4" fill="#40A0F0"/></svg>
<div class="t" style="left:179px;top:455.5px;font-size:6.5px;color:#fff;text-shadow:0.3px 0 0 #fff">Безымянный - Paint</div>
<div class="a" style="left:259.5px;top:451.5px;width:96px;height:15px;border-radius:2px;background:linear-gradient(#4C90F8,#3A80F0 40%,#3478EA)"></div>
<svg class="a" style="left:265px;top:453px" width="11" height="11" viewBox="0 0 11 11"><rect x="1.5" y="1" width="8" height="9" fill="#F4F4F4" stroke="#303860" stroke-width="0.8"/><rect x="2.5" y="3" width="4" height="4" fill="#2050B0"/></svg>
<div class="t" style="left:277px;top:455.5px;font-size:6.55px;color:#fff;text-shadow:0.3px 0 0 #fff">Документ1 - Microso...</div>
<!-- tray -->
<div class="t" style="left:540.8px;top:455.5px;font-size:6.8px;color:#D8E4FF">RL</div>
<div class="a" style="left:556px;top:450px;width:68px;height:18px;background:linear-gradient(#1CA0F2,#0E8CEA 3px,#0C88E6 15px,#0A74D0 18px);border-left:1px solid #1060C0"></div>
<div class="a" style="left:551px;top:453px;width:11px;height:11px;border-radius:50%;background:radial-gradient(circle at 40% 35%,#E8F4FF,#70B8F0 70%,#3888D8)"></div>
<svg class="a" style="left:553px;top:455px" width="7" height="7" viewBox="0 0 7 7"><path d="M4.5 1 L2 3.5 L4.5 6" stroke="#fff" stroke-width="1.3" fill="none"/></svg>
<div class="a" style="left:565px;top:453.5px;width:8px;height:10px;background:#1020A8;border:1px solid #0A0A50"></div>
<div class="a" style="left:575px;top:454px;width:9px;height:9px;border-radius:50%;background:radial-gradient(#F0E040,#40A020 60%,#207010)"></div>
<svg class="a" style="left:585px;top:453px" width="9" height="11" viewBox="0 0 9 11"><path d="M4.5 0.5 L8.5 2 L8 7 L4.5 10.5 L1 7 L0.5 2 Z" fill="#E02828" stroke="#F8E8E8" stroke-width="0.8"/><path d="M3 4 L6 7 M6 4 L3 7" stroke="#fff" stroke-width="1"/></svg>
<div class="t" style="left:599.7px;top:455.3px;font-size:6.6px;color:#fff;text-shadow:0.3px 0 0 #fff">11:09</div>
</body></html>
